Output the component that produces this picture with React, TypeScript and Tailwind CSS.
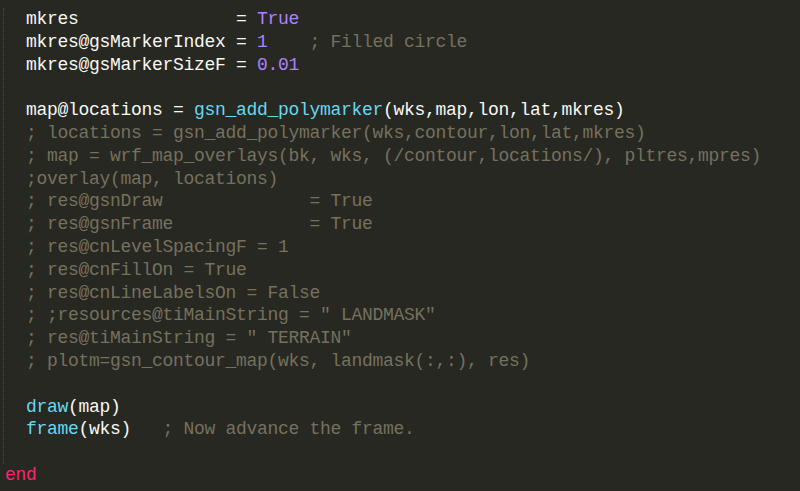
import React from "react";

const W = "text-[#f8f8f2]";
const C = "text-[#75715e]";
const P = "text-[#ae81ff]";
const F = "text-[#66d9ef]";

type Seg = [string, string];

const lines: Seg[][] = [
  [[W, "mkres               = "], [P, "True"]],
  [[W, "mkres@gsMarkerIndex = "], [P, "1"], [C, "    ; Filled circle"]],
  [[W, "mkres@gsMarkerSizeF = "], [P, "0.01"]],
  [],
  [[W, "map@locations = "], [F, "gsn_add_polymarker"], [W, "(wks,map,lon,lat,mkres)"]],
  [[C, "; locations = gsn_add_polymarker(wks,contour,lon,lat,mkres)"]],
  [[C, "; map = wrf_map_overlays(bk, wks, (/contour,locations/), pltres,mpres)"]],
  [[C, ";overlay(map, locations)"]],
  [[C, "; res@gsnDraw              = True"]],
  [[C, "; res@gsnFrame             = True"]],
  [[C, "; res@cnLevelSpacingF = 1"]],
  [[C, "; res@cnFillOn = True"]],
  [[C, "; res@cnLineLabelsOn = False"]],
  [[C, "; ;resources@tiMainString = \" LANDMASK\""]],
  [[C, "; res@tiMainString = \" TERRAIN\""]],
  [[C, "; plotm=gsn_contour_map(wks, landmask(:,:), res)"]],
  [],
  [[F, "draw"], [W, "(map)"]],
  [[F, "frame"], [W, "(wks)"], [C, "   ; Now advance the frame."]],
];

function Line({ segs }: { segs: Seg[] }) {
  return (
    <div className="h-[22.8px] leading-[22.8px] whitespace-pre">
      {segs.length === 0 ? " " : segs.map((s, i) => (
        <span key={i} className={s[0]}>{s[1]}</span>
      ))}
    </div>
  );
}

export default function App() {
  return (
    <div
      className="w-[800px] h-[491px] bg-[#272822] overflow-hidden pt-[8px] text-[18px] tracking-[-0.3px]"
      style={{ fontFamily: '"Liberation Mono", "DejaVu Sans Mono", monospace' }}
    >
      <div className="ml-[3px] border-l border-dotted border-[#4a4b45] pl-[22px]">
        {lines.map((l, i) => (
          <Line key={i} segs={l} />
        ))}
        <Line segs={[]} />
      </div>
      <div className="pl-[5px] h-[22.8px] leading-[22.8px] text-[#f92672]">end</div>
    </div>
  );
}
